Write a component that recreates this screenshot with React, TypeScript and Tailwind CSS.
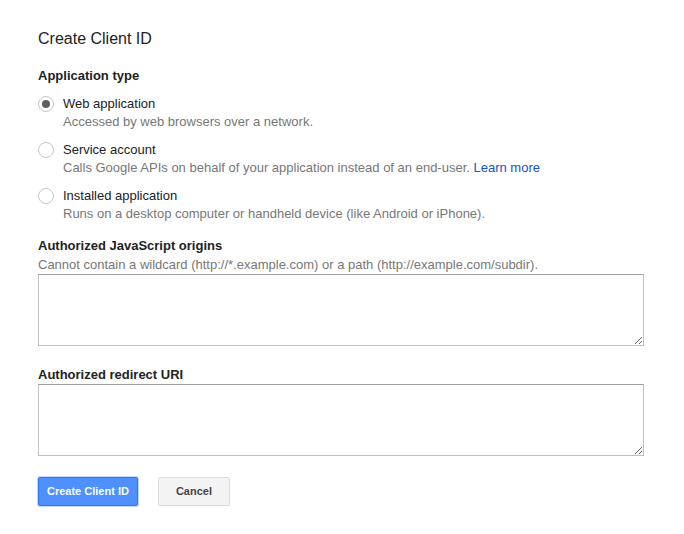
import { useState } from 'react';

const TYPES = [
  { id: 'web', label: 'Web application', desc: 'Accessed by web browsers over a network.' },
  { id: 'service', label: 'Service account', desc: 'Calls Google APIs on behalf of your application instead of an end-user.', link: true },
  { id: 'installed', label: 'Installed application', desc: 'Runs on a desktop computer or handheld device (like Android or iPhone).' },
];

function Radio({ checked }: { checked: boolean }) {
  return (
    <span className="mt-[1px] flex h-[16px] w-[16px] shrink-0 items-center justify-center rounded-full border border-[#c6c6c6] bg-white">
      {checked && <span className="h-[8px] w-[8px] rounded-full bg-[#616161]" />}
    </span>
  );
}

export default function App() {
  const [type, setType] = useState('web');

  return (
    <div className="min-h-[534px] bg-white px-[38px] pt-[29px] text-[13px] text-[#222] [font-family:'Liberation_Sans',Arial,sans-serif]">
      <h1 className="text-[16px] leading-[20px]">Create Client ID</h1>

      <h2 className="mt-[18px] font-bold leading-[18px]">Application type</h2>

      <div className="mt-[10px] flex flex-col gap-[10px]">
        {TYPES.map((t) => (
          <label key={t.id} className="flex cursor-pointer gap-[9px]" onClick={() => setType(t.id)}>
            <Radio checked={type === t.id} />
            <div>
              <div className="leading-[18px]">{t.label}</div>
              <div className="leading-[18px] text-[#777]">
                {t.desc}
                {t.link && (
                  <>
                    {' '}
                    <a href="#" className="text-[#15c]">Learn more</a>
                  </>
                )}
              </div>
            </div>
          </label>
        ))}
      </div>

      <h2 className="mt-[14px] font-bold leading-[18px]">Authorized JavaScript origins</h2>
      <p className="mt-[1px] leading-[18px] text-[#777]">
        Cannot contain a wildcard (http://*.example.com) or a path (http://example.com/subdir).
      </p>
      <textarea className="block h-[72px] w-[606px] border border-[#c0c0c0] border-t-[#a0a0a0] p-1 outline-none" />

      <h2 className="mt-[20px] font-bold leading-[18px]">Authorized redirect URI</h2>
      <textarea className="block h-[72px] w-[606px] border border-[#c0c0c0] border-t-[#a0a0a0] p-1 outline-none" />

      <div className="mt-[21px] flex gap-[20px]">
        <button className="h-[29px] rounded-[2px] border border-[#3079ed] bg-[#4d90fe] px-[8px] text-[11px] font-bold text-white shadow-[0_0_0_1px_#c4d9fb]">
          Create Client ID
        </button>
        <button className="h-[29px] w-[72px] rounded-[2px] border border-[#dcdcdc] bg-[#f3f3f3] text-[11px] font-bold text-[#444]">
          Cancel
        </button>
      </div>
    </div>
  );
}
